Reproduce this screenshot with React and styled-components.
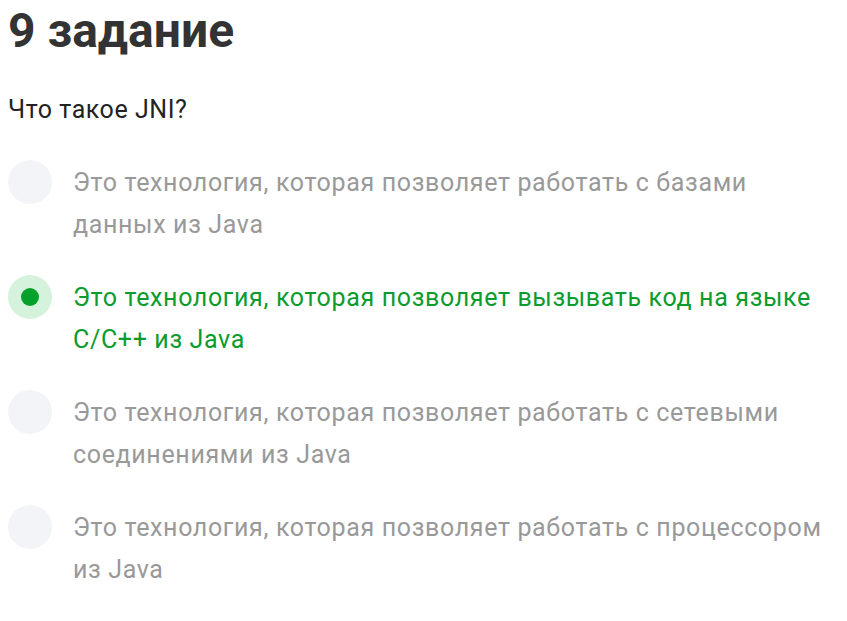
import React from 'react';
import styled, { createGlobalStyle } from 'styled-components';

const GlobalStyle = createGlobalStyle`
  body {
    margin: 8px;
    background: #ffffff;
    font-family: Roboto, "Liberation Sans", Arial, sans-serif;
  }
`;

const Title = styled.h1`
  margin: -1px 0 0;
  font-size: 48px;
  line-height: 48px;
  font-weight: 700;
  color: #333333;
`;

const Question = styled.p`
  margin: 37px 0 32px;
  font-size: 25px;
  line-height: 36px;
  letter-spacing: 0.55px;
  color: #222222;
`;

const Options = styled.div`
  display: flex;
  flex-direction: column;
  gap: 29px;
`;

const Option = styled.label`
  display: flex;
  align-items: flex-start;
  gap: 21px;
  cursor: pointer;
`;

const Radio = styled.span`
  flex: none;
  width: 44px;
  height: 44px;
  border-radius: 50%;
  background: ${({ $checked }) => ($checked ? '#d5f2dc' : '#f3f4f8')};
  display: flex;
  align-items: center;
  justify-content: center;
`;

const Dot = styled.span`
  width: 18px;
  height: 18px;
  border-radius: 50%;
  background: #03a12b;
`;

const Text = styled.span`
  padding-top: 2px;
  font-size: 25px;
  line-height: 42px;
  letter-spacing: 0.65px;
  color: ${({ $checked }) => ($checked ? '#0a9c2c' : '#999999')};
`;

const answers = [
  'Это технология, которая позволяет работать с базами данных из Java',
  'Это технология, которая позволяет вызывать код на языке C/C++ из Java',
  'Это технология, которая позволяет работать с сетевыми соединениями из Java',
  'Это технология, которая позволяет работать с процессором из Java',
];

export default function App() {
  const selected = 1;
  return (
    <>
      <GlobalStyle />
      <Title>9 задание</Title>
      <Question>Что такое JNI?</Question>
      <Options>
        {answers.map((a, i) => (
          <Option key={i}>
            <Radio $checked={i === selected}>{i === selected && <Dot />}</Radio>
            <Text $checked={i === selected}>{a}</Text>
          </Option>
        ))}
      </Options>
    </>
  );
}
